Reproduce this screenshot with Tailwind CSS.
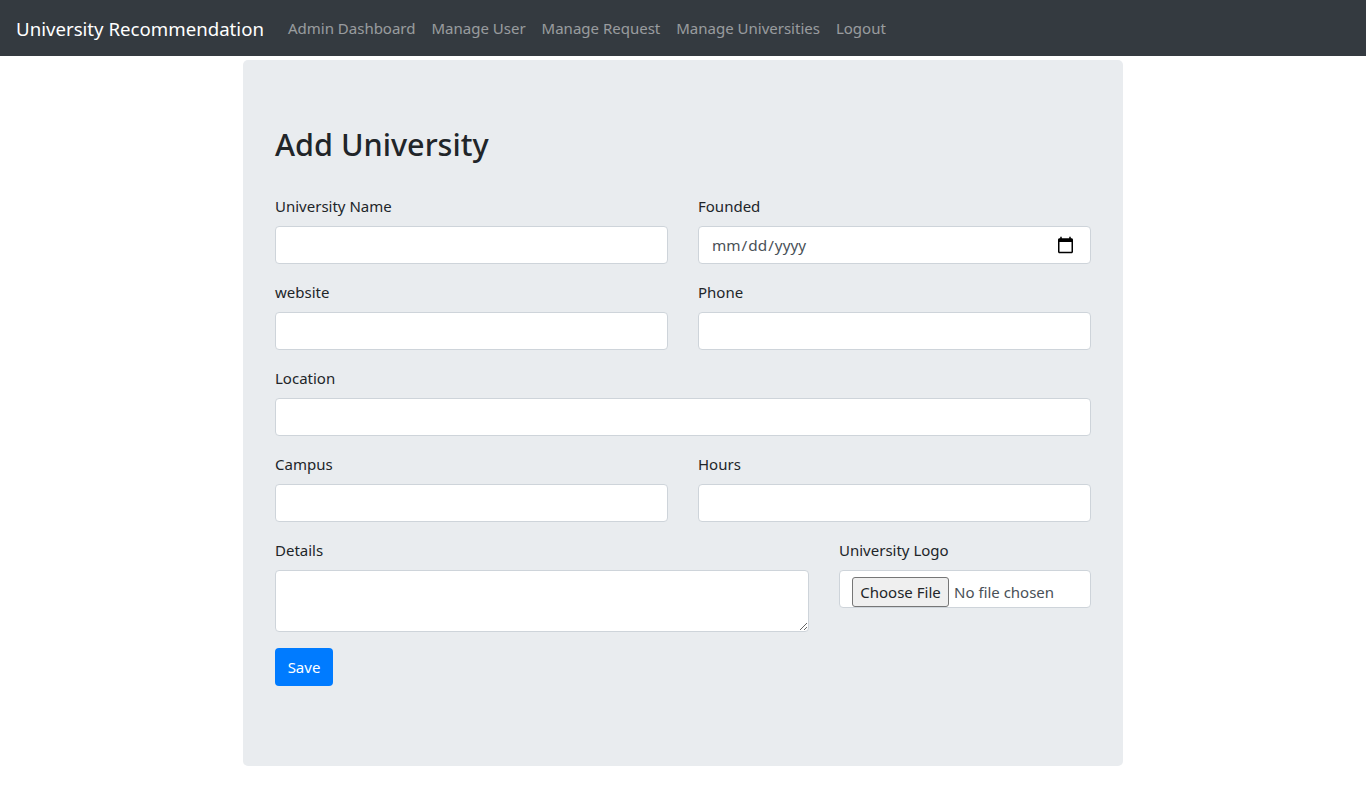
<!DOCTYPE html>
<html lang="en">

<head>
    <meta charset="UTF-8">
    <meta name="viewport" content="width=device-width, initial-scale=1.0">
    <title>Add University</title>
    <script src="https://cdn.jsdelivr.net/npm/@tailwindcss/browser@4"></script>
</head>

<body class="bg-white font-['Noto_Sans',sans-serif] text-[#212529] text-[15px]">
    <!-- Navbar -->
    <nav class="h-14 bg-[#343a40] flex items-center px-4">
        <a href="#" class="text-[18.65px] text-white mr-4 pt-px">University Recommendation</a>
        <a href="#" class="px-2 text-white/50">Admin Dashboard</a>
        <a href="#" class="px-2 text-white/50">Manage User</a>
        <a href="#" class="px-2 text-white/50">Manage Request</a>
        <a href="#" class="px-2 text-white/50">Manage Universities</a>
        <a href="#" class="px-2 text-white/50">Logout</a>
    </nav>

    <main class="w-[880px] h-[706px] mx-auto mt-1 bg-[#e9ecef] rounded-[5px] px-8 pt-16">
        <h1 class="text-[30.6px] leading-[40px] font-medium mb-[30px]">Add University</h1>

        <form>
            <div class="grid grid-cols-2 gap-x-[30px]">
                <div class="mb-4">
                    <label class="block mb-2 leading-6">University Name</label>
                    <input type="text" class="w-full h-[38px] px-3 bg-white border border-[#ced4da] rounded">
                </div>
                <div class="mb-4">
                    <label class="block mb-2 leading-6">Founded</label>
                    <input type="date" class="w-full h-[38px] px-3 pt-px bg-white border border-[#ced4da] rounded text-[#495057] text-[15.3px] [&::-webkit-calendar-picker-indicator]:w-[19px] [&::-webkit-calendar-picker-indicator]:h-[19px] [&::-webkit-calendar-picker-indicator]:mr-px [&::-webkit-calendar-picker-indicator]:mb-px">
                </div>
                <div class="mb-4">
                    <label class="block mb-2 leading-6">website</label>
                    <input type="text" class="w-full h-[38px] px-3 bg-white border border-[#ced4da] rounded">
                </div>
                <div class="mb-4">
                    <label class="block mb-2 leading-6">Phone</label>
                    <input type="text" class="w-full h-[38px] px-3 bg-white border border-[#ced4da] rounded">
                </div>
                <div class="mb-4 col-span-2">
                    <label class="block mb-2 leading-6">Location</label>
                    <input type="text" class="w-full h-[38px] px-3 bg-white border border-[#ced4da] rounded">
                </div>
                <div class="mb-4">
                    <label class="block mb-2 leading-6">Campus</label>
                    <input type="text" class="w-full h-[38px] px-3 bg-white border border-[#ced4da] rounded">
                </div>
                <div class="mb-4">
                    <label class="block mb-2 leading-6">Hours</label>
                    <input type="text" class="w-full h-[38px] px-3 bg-white border border-[#ced4da] rounded">
                </div>
            </div>

            <div class="flex gap-x-[30px]">
                <div class="w-[534px] mb-4">
                    <label class="block mb-2 leading-6">Details</label>
                    <textarea class="block w-full h-[62px] px-3 py-1.5 bg-white border border-[#ced4da] rounded"></textarea>
                </div>
                <div class="w-[252px]">
                    <label class="block mb-2 leading-6">University Logo</label>
                    <input type="file" class="block w-full h-[38px] px-3 py-1.5 bg-white border border-[#ced4da] rounded text-[#495057] overflow-hidden file:text-[#212529] file:w-[97px] file:h-[30px] file:mr-[5px] file:bg-[#efefef] file:border file:border-[#767676] file:rounded-[3px]">
                </div>
            </div>

            <button type="button" class="h-[38px] w-[58px] bg-[#007bff] text-white rounded">Save</button>
        </form>
    </main>
</body>

</html>
